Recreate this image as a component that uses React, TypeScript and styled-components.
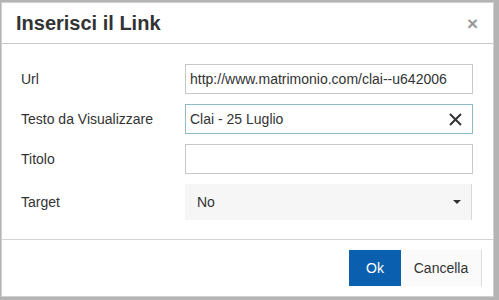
import React from "react";
import styled, { createGlobalStyle } from "styled-components";

const Global = createGlobalStyle`
  html, body { margin: 0; padding: 0; background: #b4b4b4; }
  body { font-family: "Liberation Sans", Arial, sans-serif; }
`;

const Page = styled.div`
  width: 499px;
  height: 300px;
  box-sizing: border-box;
  padding: 2px 5px 3px 1px;
  background: #b4b4b4;
`;

const Dialog = styled.div`
  width: 493px;
  height: 295px;
  box-sizing: border-box;
  background: #fff;
  border: 1px solid #d0d0d0;
  display: flex;
  flex-direction: column;
`;

const Header = styled.div`
  height: 40px;
  border-bottom: 1px solid #c8c8c8;
  display: flex;
  align-items: center;
  justify-content: space-between;
  padding: 0 15px 0 14px;
`;

const Title = styled.h1`
  margin: 0;
  font-size: 20px;
  font-weight: bold;
  color: #333;
`;

const Close = styled.span`
  font-size: 19px;
  font-weight: bold;
  color: #999;
  line-height: 1;
`;

const Body = styled.div`
  flex: 1;
  padding: 20px 20px 0 19px;
  display: grid;
  grid-template-columns: 164px 288px;
  grid-auto-rows: 30px;
  row-gap: 10px;
  align-content: start;
  border-bottom: 1px solid #d4d4d4;
`;

const Label = styled.label`
  font-size: 14px;
  color: #333;
  display: flex;
  align-items: center;
`;

const Field = styled.div<{ $focus?: boolean }>`
  box-sizing: border-box;
  height: 30px;
  border: 1px solid ${(p) => (p.$focus ? "#8fbcc4" : "#c8c8c8")};
  display: flex;
  align-items: center;
  padding: 0 10px 0 4px;
  font-size: 14px;
  color: #333;
  background: #fff;
`;

const FieldText = styled.span`
  flex: 1;
`;

const SelectBox = styled.div`
  box-sizing: border-box;
  height: 36px;
  background: #f6f6f6;
  border-right: 1px solid #d8d8d8;
  display: flex;
  align-items: center;
  justify-content: space-between;
  padding: 0 10px 0 12px;
  font-size: 14px;
  color: #333;
  width: 287px;
`;

const SelectRow = styled.div`
  grid-column: 1 / span 2;
  display: grid;
  grid-template-columns: 164px 288px;
  height: 36px;
`;

const Footer = styled.div`
  height: 56px;
  display: flex;
  justify-content: flex-end;
  align-items: center;
  padding: 0 11px 0 0;
`;

const Button = styled.button<{ $primary?: boolean }>`
  height: 36px;
  border: none;
  font-family: "Liberation Sans", Arial, sans-serif;
  font-size: 14px;
  padding: 0;
  background: ${(p) => (p.$primary ? "#0b5faf" : "#fafafa")};
  color: ${(p) => (p.$primary ? "#fff" : "#333")};
  width: ${(p) => (p.$primary ? "52px" : "81px")};
  border-right: ${(p) => (p.$primary ? "none" : "1px solid #ddd")};
`;

const Caret = () => (
  <svg width="8" height="4" viewBox="0 0 8 4">
    <path d="M0 0 L8 0 L4 4 Z" fill="#333" />
  </svg>
);

const ClearIcon = () => (
  <svg width="13" height="13" viewBox="0 0 13 13">
    <path d="M1 1 L12 12 M12 1 L1 12" stroke="#333" strokeWidth="2" />
  </svg>
);

export default function App() {
  return (
    <>
      <Global />
      <Page>
        <Dialog>
          <Header>
            <Title>Inserisci il Link</Title>
            <Close>×</Close>
          </Header>
          <Body>
            <Label>Url</Label>
            <Field>
              <FieldText>http://www.matrimonio.com/clai--u642006</FieldText>
            </Field>
            <Label>Testo da Visualizzare</Label>
            <Field $focus>
              <FieldText>Clai - 25 Luglio</FieldText>
              <ClearIcon />
            </Field>
            <Label>Titolo</Label>
            <Field />
            <SelectRow>
              <Label>Target</Label>
              <SelectBox>
                <span>No</span>
                <Caret />
              </SelectBox>
            </SelectRow>
          </Body>
          <Footer>
            <Button $primary>Ok</Button>
            <Button>Cancella</Button>
          </Footer>
        </Dialog>
      </Page>
    </>
  );
}
